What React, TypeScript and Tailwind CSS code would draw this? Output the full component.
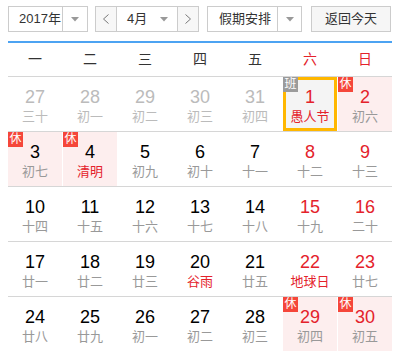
import React from "react";

type Cell = {
  d: number;
  l: string;
  other?: boolean;
  redNum?: boolean;
  redLunar?: boolean;
  badge?: "休" | "班";
  pink?: boolean;
  today?: boolean;
};

const rows: Cell[][] = [
  [
    { d: 27, l: "三十", other: true },
    { d: 28, l: "初一", other: true },
    { d: 29, l: "初二", other: true },
    { d: 30, l: "初三", other: true },
    { d: 31, l: "初四", other: true },
    { d: 1, l: "愚人节", redNum: true, redLunar: true, badge: "班", today: true },
    { d: 2, l: "初六", redNum: true, badge: "休", pink: true },
  ],
  [
    { d: 3, l: "初七", badge: "休", pink: true },
    { d: 4, l: "清明", redLunar: true, badge: "休", pink: true },
    { d: 5, l: "初九" },
    { d: 6, l: "初十" },
    { d: 7, l: "十一" },
    { d: 8, l: "十二", redNum: true },
    { d: 9, l: "十三", redNum: true },
  ],
  [
    { d: 10, l: "十四" },
    { d: 11, l: "十五" },
    { d: 12, l: "十六" },
    { d: 13, l: "十七" },
    { d: 14, l: "十八" },
    { d: 15, l: "十九", redNum: true },
    { d: 16, l: "二十", redNum: true },
  ],
  [
    { d: 17, l: "廿一" },
    { d: 18, l: "廿二" },
    { d: 19, l: "廿三" },
    { d: 20, l: "谷雨", redLunar: true },
    { d: 21, l: "廿五" },
    { d: 22, l: "地球日", redNum: true, redLunar: true },
    { d: 23, l: "廿七", redNum: true },
  ],
  [
    { d: 24, l: "廿八" },
    { d: 25, l: "廿九" },
    { d: 26, l: "初一" },
    { d: 27, l: "初二" },
    { d: 28, l: "初三" },
    { d: 29, l: "初四", redNum: true, badge: "休", pink: true },
    { d: 30, l: "初五", redNum: true, badge: "休", pink: true },
  ],
];

const weekdays = ["一", "二", "三", "四", "五", "六", "日"];

const Tri = () => (
  <svg width="8" height="5" viewBox="0 0 8 5">
    <path d="M0 0 L8 0 L4 4.5 Z" fill="#999" />
  </svg>
);

const Chevron = ({ right }: { right?: boolean }) => (
  <svg width="6" height="10" viewBox="0 0 6 10">
    <polyline
      points={right ? "0.5,0.5 5.5,5 0.5,9.5" : "5.5,0.5 0.5,5 5.5,9.5"}
      fill="none"
      stroke="#777"
      strokeWidth="1"
    />
  </svg>
);

function DayCell({ c }: { c: Cell }) {
  const numColor = c.other ? "text-[#bbbbbb]" : c.redNum ? "text-[#e4222b]" : "text-black";
  const lunarColor = c.other
    ? "text-[#bbbbbb]"
    : c.redLunar
    ? "text-[#e4222b]"
    : "text-[#999999]";
  const bg = c.today ? "bg-[#f4f4f4] ring-[3px] ring-inset ring-[#ffb700]" : c.pink ? "bg-[#fdeeee]" : "bg-white";
  return (
    <div className={`relative flex flex-col items-center pt-[10px] h-[54px] ${bg}`}>
      {c.badge && (
        <div
          className={`absolute top-0 left-0 w-[15px] h-[15px] text-[12px] leading-[15px] text-white text-center ${
            c.badge === "休" ? "bg-[#f5463a]" : "bg-[#9b9b9b]"
          }`}
        >
          {c.badge}
        </div>
      )}
      <div className={`text-[18px] leading-[20px] ${numColor}`}>{c.d}</div>
      <div className={`mt-[2px] text-[13px] leading-[16px] ${lunarColor}`}>{c.l}</div>
    </div>
  );
}

export default function App() {
  return (
    <div
      className="w-[399px] h-[357px] bg-white px-[8px] pt-[6px] text-[#333]"
      style={{ fontFamily: '"Liberation Sans", "Noto Sans CJK SC", sans-serif' }}
    >
      <div className="flex h-[26px] w-[384px] text-[13px]">
        <div className="flex w-[80px] border border-[#cccccc] bg-white">
          <div className="w-[54px] border-r border-[#cccccc] pl-[10px] leading-[24px]">2017年</div>
          <div className="flex-1 flex items-center justify-center">
            <Tri />
          </div>
        </div>
        <div className="ml-[7px] flex w-[104px] border border-[#cccccc] bg-white">
          <div className="w-[21px] border-r border-[#cccccc] bg-[#f7f7f7] flex items-center justify-center">
            <Chevron />
          </div>
          <div className="flex w-[61px] items-center border-r border-[#cccccc] pl-[10px] pr-[9px]">
            <span className="leading-[24px]">4月</span>
            <span className="ml-auto flex">
              <Tri />
            </span>
          </div>
          <div className="flex-1 bg-[#f7f7f7] flex items-center justify-center">
            <Chevron right />
          </div>
        </div>
        <div className="ml-[8px] flex w-[95px] border border-[#cccccc] bg-white">
          <div className="w-[70px] border-r border-[#cccccc] pl-[11px] leading-[24px]">假期安排</div>
          <div className="flex-1 flex items-center justify-center">
            <Tri />
          </div>
        </div>
        <div className="ml-[9px] w-[80px] border border-[#cccccc] bg-[#f6f6f6] text-center leading-[24px]">
          返回今天
        </div>
      </div>

      <div className="mt-[9px] w-[384px] h-[2px] bg-[#4ca3f2]" />
      <div className="grid grid-cols-7 gap-x-px w-[384px] h-[33px] items-center text-[14px] text-[#333]">
        {weekdays.map((w, i) => (
          <div key={w} className={`text-center ${i >= 5 ? "text-[#e4222b]" : ""}`}>
            {w}
          </div>
        ))}
      </div>
      <div className="w-[384px]">
        {rows.map((r, ri) => (
          <div key={ri} className="grid grid-cols-7 gap-x-px border-t border-[#d6d6d6]">
            {r.map((c, ci) => (
              <DayCell key={ci} c={c} />
            ))}
          </div>
        ))}
      </div>
    </div>
  );
}
